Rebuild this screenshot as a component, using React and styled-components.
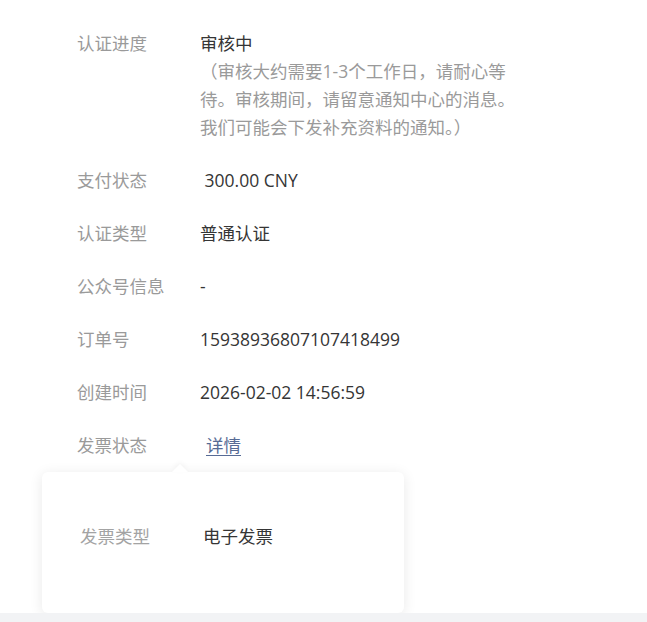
import React from 'react'
import styled, { createGlobalStyle } from 'styled-components';

const GlobalStyle = createGlobalStyle`
  html, body {
    margin: 0;
    padding: 0;
    background: #f2f3f5;
  }
  body {
    font-family: "Open Sans", "Noto Sans CJK SC", sans-serif;
  }
`;

const rows = [
    { label: '认证进度', value: '审核中', note: '（审核大约需要1-3个工作日，请耐心等待。审核期间，请留意通知中心的消息。我们可能会下发补充资料的通知。）' },
    { label: '支付状态', value: '\u00a0300.00 CNY' },
    { label: '认证类型', value: '普通认证' },
    { label: '公众号信息', value: '-' },
    { label: '订单号', value: '15938936807107418499' },
    { label: '创建时间', value: '2026-02-02 14:56:59' },
];

export default function App() {
    return (
        <>
            <GlobalStyle />
            <Page>
                <InfoList>
                    {rows.map((row) => (
                        <Row key={row.label}>
                            <Label>{row.label}</Label>
                            <Value>
                                {row.value}
                                {row.note && <Note>{row.note}</Note>}
                            </Value>
                        </Row>
                    ))}
                    <Row>
                        <Label>发票状态</Label>
                        <Value>
                            <LinkWrap>
                                <Link href="#">详情</Link>
                                <Popover>
                                    <PopRow>
                                        <PopLabel>发票类型</PopLabel>
                                        <Value>电子发票</Value>
                                    </PopRow>
                                </Popover>
                            </LinkWrap>
                        </Value>
                    </Row>
                </InfoList>
            </Page>
        </>
    )
}

const Page = styled.div`
background: #ffffff;
height: 613px;
overflow: visible;
`;

const InfoList = styled.div`
display: flex;
flex-direction: column;
gap: 25px;
padding: 29px 0 0 77px;
font-size: 17.5px;
line-height: 28px;
`;

const Row = styled.div`
display: flex;
align-items: flex-start;
`;

const Label = styled.div`
width: 123px;
flex-shrink: 0;
color: #9a9a9a;
`;

const Value = styled.div`
color: #353535;
max-width: 318px;
`;

const Note = styled.div`
color: #9a9a9a;
`;

const LinkWrap = styled.span`
position: relative;
display: inline-block;
padding-left: 6px;
`;

const Link = styled.a`
color: #576b95;
text-decoration: underline;
text-underline-offset: 3px;
`;

const Popover = styled.div`
position: absolute;
top: 41px;
left: -158px;
width: 362px;
height: 141px;
box-sizing: border-box;
background: #ffffff;
border-radius: 6px;
box-shadow: 0 2px 14px rgba(0, 0, 0, 0.09);
padding: 50px 0 0 38px;
z-index: 2;
&::before {
    content: '';
    position: absolute;
    top: -8px;
    left: 130px;
    width: 0;
    height: 0;
    border-left: 8px solid transparent;
    border-right: 8px solid transparent;
    border-bottom: 8px solid #ffffff;
    filter: drop-shadow(0 -2px 2px rgba(0, 0, 0, 0.04));
}
`;

const PopRow = styled.div`
display: flex;
align-items: flex-start;
`;

const PopLabel = styled(Label)`
color: #a3a3a3;
`;
